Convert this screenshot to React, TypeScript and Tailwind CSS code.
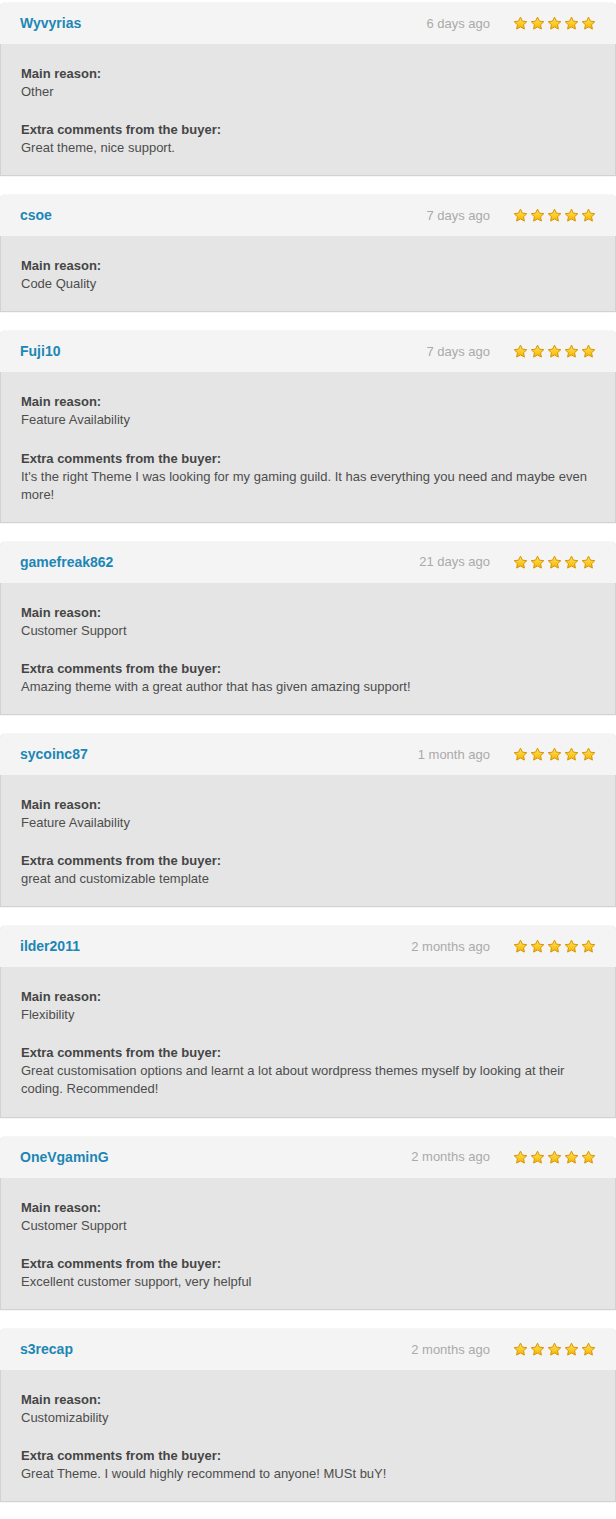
import React from "react";

type Review = { name: string; date: string; reason: string; comment?: string };

const reviews: Review[] = [
  { name: "Wyvyrias", date: "6 days ago", reason: "Other", comment: "Great theme, nice support." },
  { name: "csoe", date: "7 days ago", reason: "Code Quality" },
  {
    name: "Fuji10",
    date: "7 days ago",
    reason: "Feature Availability",
    comment: "It's the right Theme I was looking for my gaming guild. It has everything you need and maybe even more!",
  },
  { name: "gamefreak862", date: "21 days ago", reason: "Customer Support", comment: "Amazing theme with a great author that has given amazing support!" },
  { name: "sycoinc87", date: "1 month ago", reason: "Feature Availability", comment: "great and customizable template" },
  {
    name: "ilder2011",
    date: "2 months ago",
    reason: "Flexibility",
    comment: "Great customisation options and learnt a lot about wordpress themes myself by looking at their coding. Recommended!",
  },
  { name: "OneVgaminG", date: "2 months ago", reason: "Customer Support", comment: "Excellent customer support, very helpful" },
  { name: "s3recap", date: "2 months ago", reason: "Customizability", comment: "Great Theme. I would highly recommend to anyone! MUSt buY!" },
];

function Star() {
  return (
    <svg width="15" height="15" viewBox="0 0 24 24" className="block">
      <defs>
        <linearGradient id="sg" x1="0" y1="0" x2="0" y2="1">
          <stop offset="0" stopColor="#ffe45c" />
          <stop offset="1" stopColor="#f7b500" />
        </linearGradient>
      </defs>
      <path
        d="M12 1.8l3.05 6.4 7 .9-5.15 4.85 1.3 6.95L12 17.5l-6.2 3.4 1.3-6.95L1.95 9.1l7-.9z"
        fill="url(#sg)"
        stroke="#d89400"
        strokeWidth="1.6"
        strokeLinejoin="round"
      />
    </svg>
  );
}

function Card({ r }: { r: Review }) {
  return (
    <div className="rounded-t-[5px] shadow-[0_0_1px_rgba(0,0,0,0.35)]">
      <div className="flex h-[41px] items-center rounded-t-[5px] bg-[#f4f4f4] pl-[20px] pr-[20px] shadow-[0_1px_1px_rgba(0,0,0,0.06)]">
        <span className="text-[14px] font-bold text-[#1c87b4]">{r.name}</span>
        <span className="ml-auto text-[13px] text-[#aaaaaa]">{r.date}</span>
        <div className="ml-[23px] flex gap-[2px]">
          {[0, 1, 2, 3, 4].map((i) => (
            <Star key={i} />
          ))}
        </div>
      </div>
      <div className="flex flex-col gap-[20px] border-x border-b border-[#d2d2d2] bg-[#e5e5e5] pb-[18px] pl-[20px] pr-[20px] pt-[21px] text-[13px] leading-[18.07px] text-[#4d4d4d]">
        <div>
          <div className="font-bold text-[#454545]">Main reason:</div>
          <div>{r.reason}</div>
        </div>
        {r.comment && (
          <div>
            <div className="font-bold text-[#454545]">Extra comments from the buyer:</div>
            <div>{r.comment}</div>
          </div>
        )}
      </div>
    </div>
  );
}

export default function App() {
  return (
    <div
      className="flex min-h-[1519px] flex-col gap-[19px] bg-white pt-[3px]"
      style={{ fontFamily: '"Liberation Sans", Arial, sans-serif' }}
    >
      {reviews.map((r) => (
        <Card key={r.name} r={r} />
      ))}
    </div>
  );
}
